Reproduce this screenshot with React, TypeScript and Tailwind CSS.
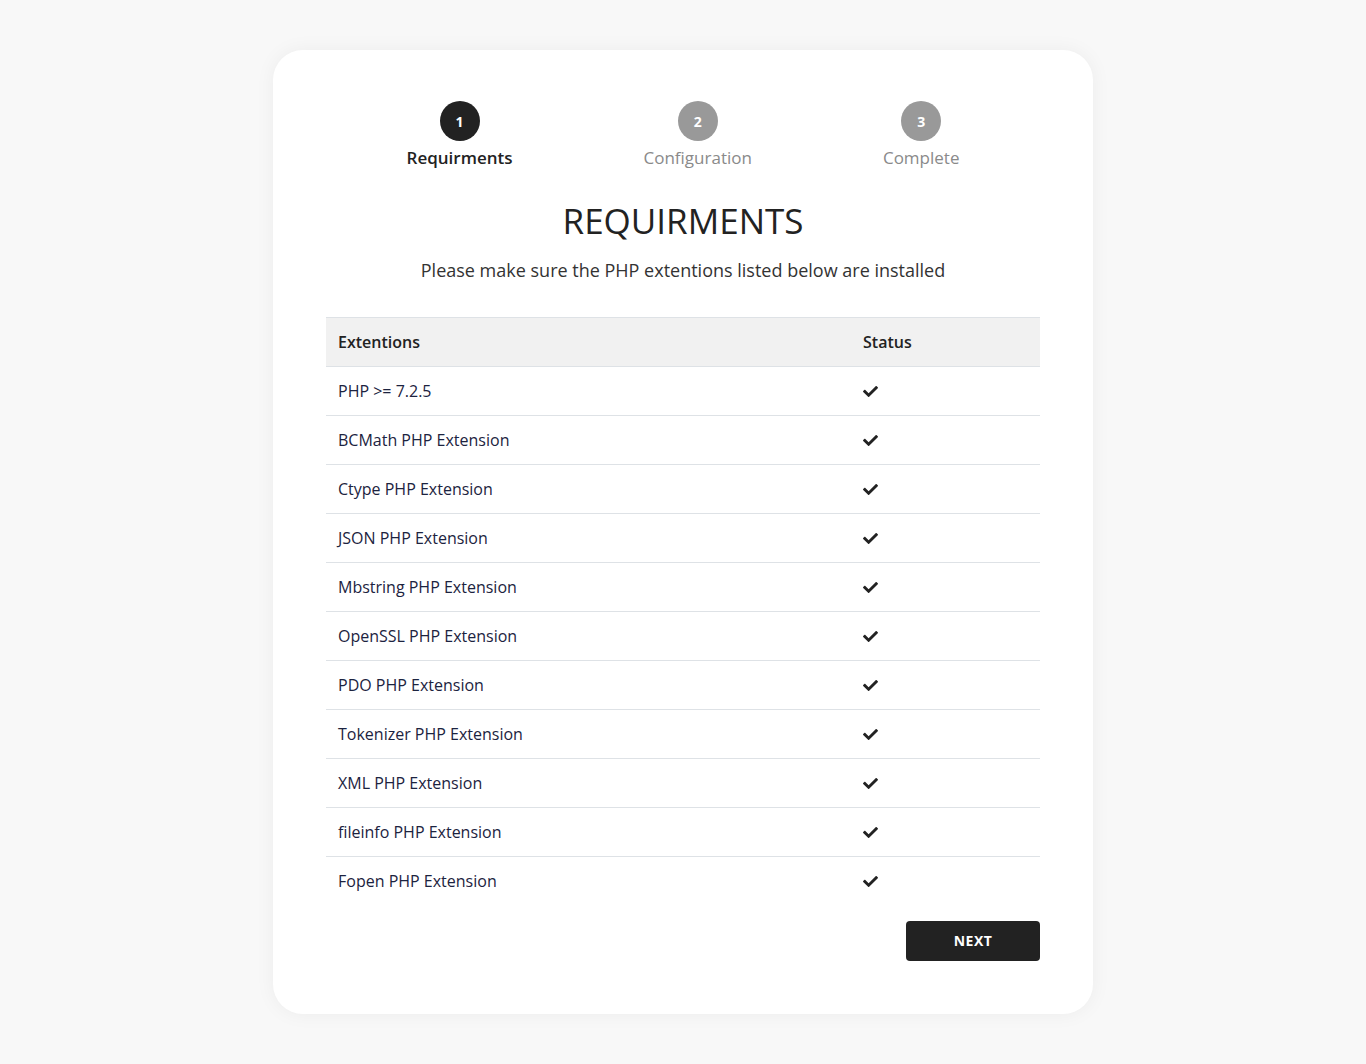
import { FaCheck } from 'react-icons/fa'

const steps = [
  { n: 1, label: 'Requirments', active: true },
  { n: 2, label: 'Configuration', active: false },
  { n: 3, label: 'Complete', active: false },
]

const extensions = [
  'PHP >= 7.2.5',
  'BCMath PHP Extension',
  'Ctype PHP Extension',
  'JSON PHP Extension',
  'Mbstring PHP Extension',
  'OpenSSL PHP Extension',
  'PDO PHP Extension',
  'Tokenizer PHP Extension',
  'XML PHP Extension',
  'fileinfo PHP Extension',
  'Fopen PHP Extension',
]

export default function App() {
  return (
    <div className="min-h-[1064px] bg-[#f8f8f8] pt-[50px] font-['Open_Sans',sans-serif]">
      <div className="mx-auto w-[820px] rounded-[30px] bg-white px-[53px] pb-[53px] pt-[51px] shadow-[0_0_20px_rgba(0,0,0,0.05)]">
        <div className="flex justify-center gap-[131px]">
          {steps.map((step) => (
            <div key={step.n} className="flex flex-col items-center">
              <div
                className={
                  step.active
                    ? 'flex h-10 w-10 items-center justify-center rounded-full bg-[#222] text-[14px] font-bold text-white'
                    : 'flex h-10 w-10 items-center justify-center rounded-full bg-[#999] text-[14px] font-bold text-white'
                }
              >
                {step.n}
              </div>
              <span
                className={
                  step.active
                    ? 'mt-[6px] text-[17px] font-semibold leading-[22px] text-[#222]'
                    : 'mt-[6px] text-[17px] leading-[22px] text-[#8a8a8a]'
                }
              >
                {step.label}
              </span>
            </div>
          ))}
        </div>

        <h1 className="mt-[30px] text-center text-[35px] font-medium leading-[44px] text-[#222]">
          REQUIRMENTS
        </h1>
        <p className="mt-[15px] text-center text-[18px] leading-[24px] text-[#333]">
          Please make sure the PHP extentions listed below are installed
        </p>

        <table className="mt-[35px] w-full border-collapse text-[16px]">
          <thead>
            <tr className="h-[49px] border-y border-[#dee2e6] bg-[#f1f1f1]">
              <th className="px-3 text-left font-semibold text-[#222]">Extentions</th>
              <th className="w-[189px] px-3 text-left font-semibold text-[#222]">Status</th>
            </tr>
          </thead>
          <tbody>
            {extensions.map((ext, i) => (
              <tr
                key={ext}
                className={
                  i === extensions.length - 1
                    ? 'h-[49px]'
                    : 'h-[49px] border-b border-[#dee2e6]'
                }
              >
                <td className="px-3 text-[#1c2340]">{ext}</td>
                <td className="px-3 text-[#222]">
                  <FaCheck size={15} />
                </td>
              </tr>
            ))}
          </tbody>
        </table>

        <div className="mt-[15px] flex justify-end">
          <button
            type="button"
            className="h-10 w-[134px] rounded-[4px] bg-[#222] text-[14px] font-bold tracking-[0.5px] text-white"
          >
            NEXT
          </button>
        </div>
      </div>
    </div>
  )
}
